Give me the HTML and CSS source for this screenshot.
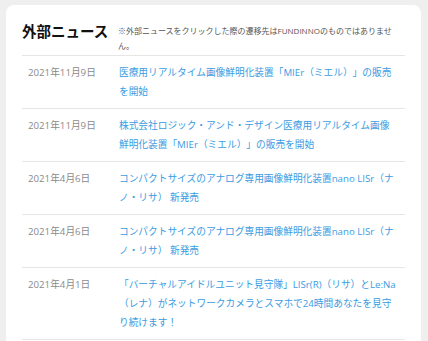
FILE: index.html
```html
<!DOCTYPE html>
<html lang="ja">
<head>
    <meta charset="UTF-8">
    <meta name="viewport" content="width=device-width, initial-scale=1.0">
    <link rel="stylesheet" href="styles.css">
    <title>外部ニュース</title>
</head>
<body>
    <section class="news-card">
        <div class="news-head">
            <h2>外部ニュース</h2>
            <p class="note">※外部ニュースをクリックした際の遷移先はFUNDINNOのものではありません。</p>
        </div>
        <ul class="news-list">
            <li class="news-item">
                <span class="date">2021年11月9日</span>
                <a href="#" class="title">医療用リアルタイム画像鮮明化装置「MIEr（ミエル）」の販売を開始</a>
            </li>
            <li class="news-item">
                <span class="date">2021年11月9日</span>
                <a href="#" class="title">株式会社ロジック・アンド・デザイン医療用リアルタイム画像鮮明化装置「MIEr（ミエル）」の販売を開始</a>
            </li>
            <li class="news-item">
                <span class="date">2021年4月6日</span>
                <a href="#" class="title">コンパクトサイズのアナログ専用画像鮮明化装置nano LISr（ナノ・リサ） 新発売</a>
            </li>
            <li class="news-item">
                <span class="date">2021年4月6日</span>
                <a href="#" class="title">コンパクトサイズのアナログ専用画像鮮明化装置nano LISr（ナノ・リサ） 新発売</a>
            </li>
            <li class="news-item">
                <span class="date">2021年4月1日</span>
                <a href="#" class="title">「バーチャルアイドルユニット見守隊」LISr(R)（リサ）とLe:Na（レナ）がネットワークカメラとスマホで24時間あなたを見守り続けます！</a>
            </li>
        </ul>
    </section>
</body>
</html>
```

FILE: styles.css
```css
body {
    font-family: "Open Sans", "Noto Sans CJK JP", sans-serif;
    background-color: #efefef;
    margin: 0;
    padding: 5px 7px 0 6px;
    text-spacing-trim: space-all;
}

.news-card {
    background: #ffffff;
    border-radius: 8px 8px 0 0;
    padding: 16px 16px 0 16px;
    min-height: 400px;
}

.news-head {
    display: flex;
    align-items: flex-start;
    padding-bottom: 2px;
    border-bottom: 1px solid #e6e6e6;
}

.news-head h2 {
    margin: 0;
    width: 96px;
    flex-shrink: 0;
    font-size: 14.5px;
    line-height: 18px;
    font-weight: bold;
    color: #111;
    padding-top: 2px;
}

.note {
    margin: 0;
    font-size: 8px;
    line-height: 15px;
    color: #555;
    padding-top: 2px;
}

.news-list {
    list-style: none;
    margin: 0;
    padding: 0;
}

.news-item {
    display: flex;
    padding: 7px 6px 7px 6px;
    border-bottom: 1px solid #e6e6e6;
    font-size: 9.7px;
    line-height: 19px;
}

.date {
    width: 91px;
    flex-shrink: 0;
    color: #8a8a8a;
}

.title {
    color: #3a9ce2;
    text-decoration: none;
}
```
